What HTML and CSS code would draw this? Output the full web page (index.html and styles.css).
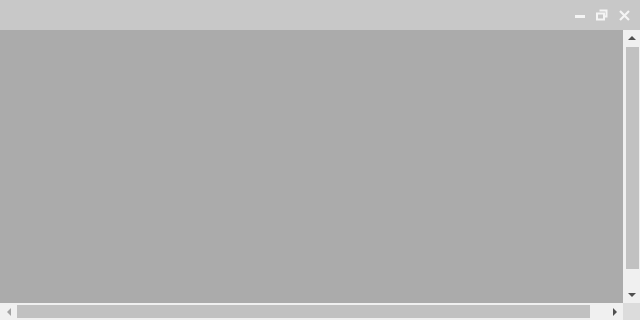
FILE: index.html
```html
<!DOCTYPE html>
<html>
<head>
<meta charset="utf-8">
<link rel="stylesheet" href="styles.css">
</head>
<body>
<div class="window">
  <div class="titlebar">
    <div class="controls">
      <svg class="btn" width="14" height="14" viewBox="0 0 14 14"><rect x="3" y="6" width="10" height="3" fill="#f4f4f4"/></svg>
      <svg class="btn" width="14" height="14" viewBox="0 0 14 14"><path d="M4.5 1.5h7v6h-2M2 4.5h7v6h-7z" fill="none" stroke="#f4f4f4" stroke-width="2"/></svg>
      <svg class="btn" width="14" height="14" viewBox="0 0 14 14"><path d="M2 2l9 9M11 2l-9 9" stroke="#f4f4f4" stroke-width="2.2"/></svg>
    </div>
  </div>
  <div class="body">
    <div class="main">
      <div class="content"></div>
      <div class="vscroll">
        <div class="arrow up"></div>
        <div class="vthumb"></div>
        <div class="arrow down"></div>
      </div>
    </div>
    <div class="bottom">
      <div class="hscroll">
        <div class="arrow left"></div>
        <div class="hthumb"></div>
        <div class="arrow right"></div>
      </div>
      <div class="corner"></div>
    </div>
  </div>
</div>
</body>
</html>
```

FILE: styles.css
```css
html, body {
  margin: 0;
  padding: 0;
  width: 640px;
  height: 320px;
  overflow: hidden;
  font-family: "Liberation Sans", Arial, sans-serif;
}
.window {
  width: 640px;
  height: 320px;
  display: flex;
  flex-direction: column;
}
.titlebar {
  height: 30px;
  background: #c8c8c8;
  display: flex;
  justify-content: flex-end;
  align-items: center;
}
.controls {
  display: flex;
  gap: 9px;
  padding-right: 8px;
  padding-top: 1px;
}
.btn { display: block; }
.body {
  flex: 1;
  display: flex;
  flex-direction: column;
}
.main {
  flex: 1;
  display: flex;
}
.content {
  flex: 1;
  background: #ababab;
}
.vscroll {
  width: 17px;
  background: #f0f0f0;
  display: flex;
  flex-direction: column;
  align-items: center;
}
.vthumb {
  width: 13px;
  flex: 1;
  background: #c1c1c1;
  margin: 0 0 17px 1px;
}
.arrow {
  width: 17px;
  height: 17px;
  flex: none;
  display: flex;
  align-items: center;
  justify-content: center;
}
.arrow::before {
  content: "";
  width: 0;
  height: 0;
  border: 4px solid transparent;
}
.arrow.up::before {
  border-bottom: 4px solid #505050;
  border-top: 0;
  margin-bottom: 2px;
}
.arrow.down::before {
  border-top: 4px solid #505050;
  border-bottom: 0;
}
.arrow.left::before {
  border-right: 4px solid #a3a3a3;
  border-left: 0;
}
.arrow.right::before {
  border-left: 4px solid #505050;
  border-right: 0;
}
.bottom {
  height: 17px;
  display: flex;
}
.hscroll {
  flex: 1;
  background: #f0f0f0;
  display: flex;
  align-items: center;
}
.hthumb {
  flex: 1;
  height: 13px;
  background: #c1c1c1;
  margin-right: 16px;
}
.corner {
  width: 17px;
  background: #dcdcdc;
}
```
